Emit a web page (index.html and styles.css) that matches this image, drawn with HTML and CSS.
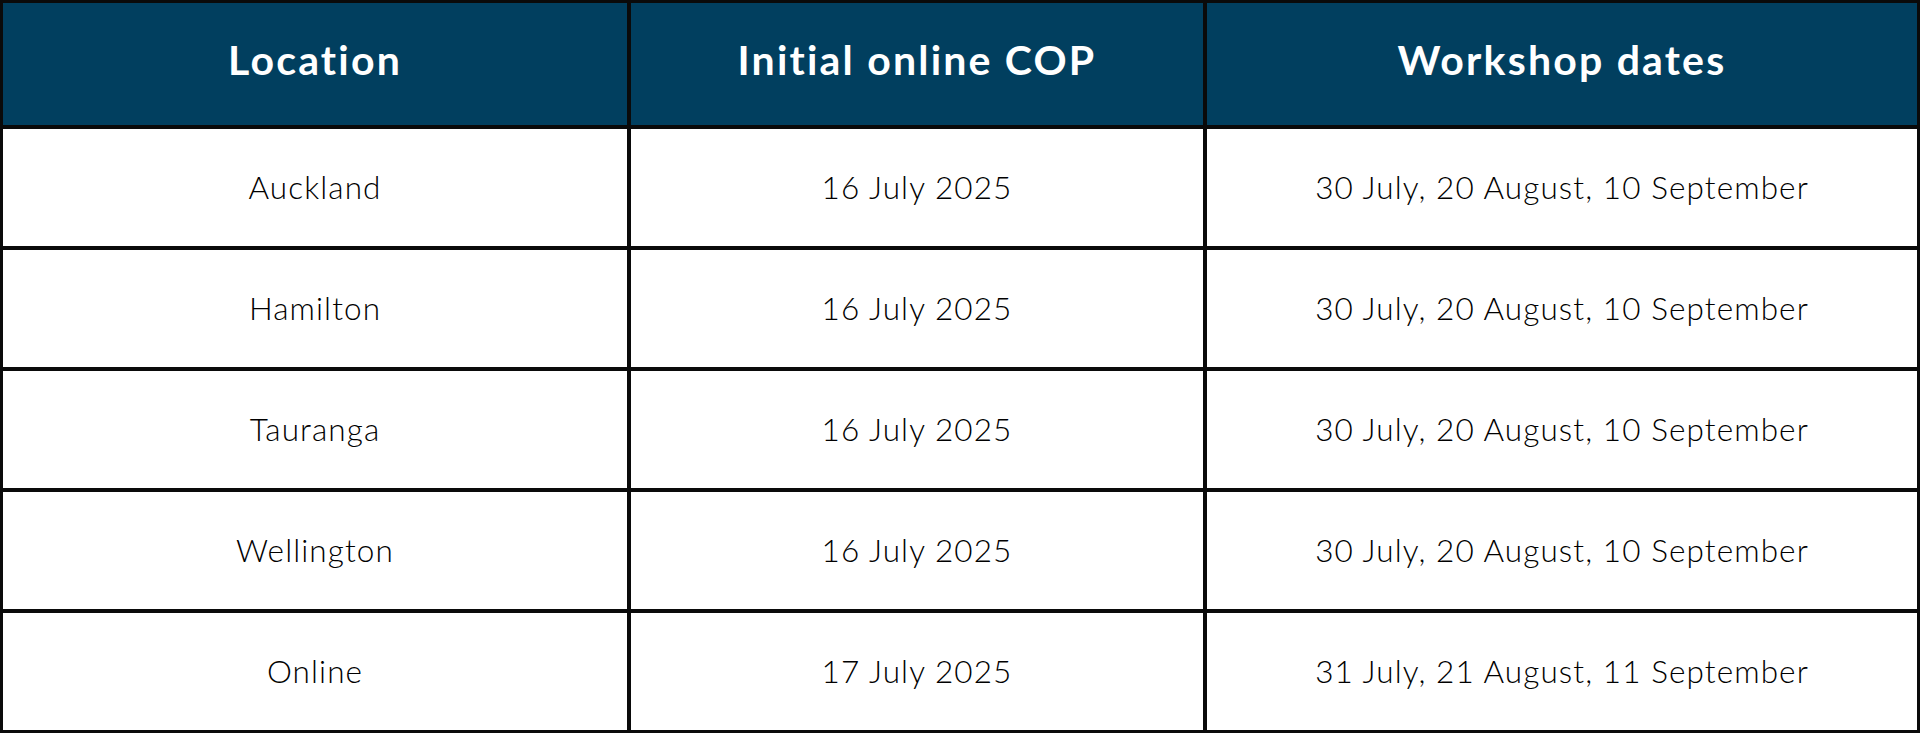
FILE: index.html
```html
<!DOCTYPE html>
<html lang="en">
<head>
<meta charset="utf-8">
<title>Workshop schedule</title>
<link rel="stylesheet" href="styles.css">
</head>
<body>
<div class="schedule" role="table">
  <div class="cell head" role="columnheader">Location</div>
  <div class="cell head" role="columnheader">Initial online COP</div>
  <div class="cell head" role="columnheader">Workshop dates</div>

  <div class="cell" role="cell">Auckland</div>
  <div class="cell" role="cell">16 July 2025</div>
  <div class="cell" role="cell">30 July, 20 August, 10 September</div>

  <div class="cell" role="cell">Hamilton</div>
  <div class="cell" role="cell">16 July 2025</div>
  <div class="cell" role="cell">30 July, 20 August, 10 September</div>

  <div class="cell" role="cell">Tauranga</div>
  <div class="cell" role="cell">16 July 2025</div>
  <div class="cell" role="cell">30 July, 20 August, 10 September</div>

  <div class="cell" role="cell">Wellington</div>
  <div class="cell" role="cell">16 July 2025</div>
  <div class="cell" role="cell">30 July, 20 August, 10 September</div>

  <div class="cell" role="cell">Online</div>
  <div class="cell" role="cell">17 July 2025</div>
  <div class="cell" role="cell">31 July, 21 August, 11 September</div>
</div>
</body>
</html>
```
FILE: styles.css
```css
html, body {
  margin: 0;
  padding: 0;
  background: #ffffff;
}

.schedule {
  box-sizing: border-box;
  width: 1920px;
  height: 733px;
  padding: 3px;
  background: #0a0a0a;
  display: grid;
  grid-template-columns: 624px 572px 1fr;
  grid-template-rows: 122px repeat(5, 1fr);
  gap: 4px;
  font-family: Lato, "Noto Sans", sans-serif;
}

.cell {
  background: #ffffff;
  color: #000000;
  display: flex;
  align-items: center;
  justify-content: center;
  font-size: 31.5px;
  font-weight: 300;
  letter-spacing: 1.1px;
  padding-bottom: 2px;
}

.head {
  background: #013f5f;
  color: #ffffff;
  font-size: 41px;
  font-weight: 700;
  letter-spacing: 2.2px;
  padding-bottom: 10px;
}
```
